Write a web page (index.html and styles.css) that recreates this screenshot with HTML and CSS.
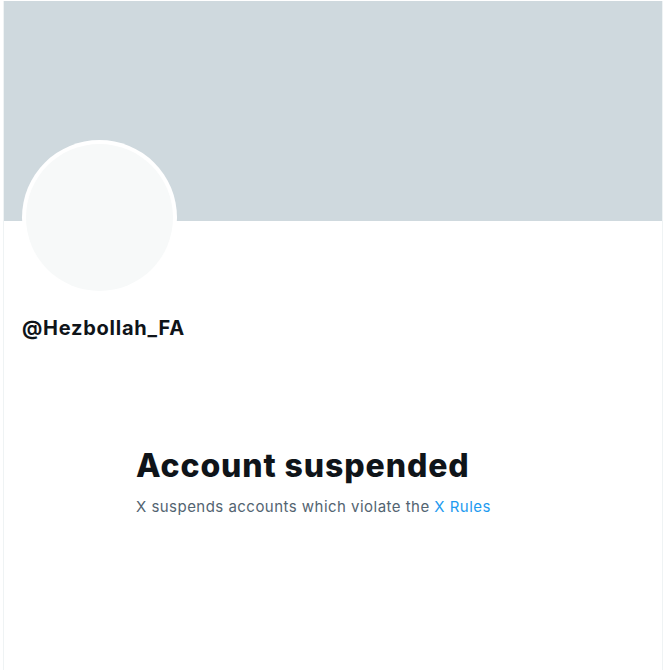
FILE: index.html
```html
<!DOCTYPE html>
<html>
<head>
<meta charset="utf-8">
<link rel="stylesheet" href="styles.css">
</head>
<body>
<main class="column">
  <div class="banner"></div>
  <div class="profile">
    <div class="avatar"><div class="avatar-inner"></div></div>
    <div class="handle">@Hezbollah_FA</div>
  </div>
  <section class="empty">
    <h1 class="empty-title">Account suspended</h1>
    <p class="empty-text">X suspends accounts which violate the <a class="link" href="#">X Rules</a></p>
  </section>
</main>
</body>
</html>
```
FILE: styles.css
```css
html, body {
  margin: 0;
  padding: 0;
  background: #ffffff;
}
body {
  font-family: "Inter", "Noto Sans", sans-serif;
  color: #0f1419;
}
.column {
  width: 658px;
  min-height: 670px;
  margin-left: 3px;
  border-left: 1px solid #eff3f4;
  border-right: 1px solid #eff3f4;
  box-sizing: content-box;
}
.banner {
  height: 220px;
  margin-top: 1px;
  background: #cfd9de;
}
.profile {
  padding: 0 18px;
}
.avatar {
  width: 155px;
  height: 155px;
  margin-top: -81px;
  border-radius: 50%;
  background: #ffffff;
  padding: 4px;
  box-sizing: border-box;
}
.avatar-inner {
  width: 100%;
  height: 100%;
  border-radius: 50%;
  background: #f7f9f9;
}
.handle {
  margin-top: 21px;
  font-size: 20px;
  font-weight: 700;
  line-height: 24px;
  letter-spacing: 0.75px;
}
.empty {
  margin: 108px 0 0 132px;
  width: 420px;
}
.empty-title {
  margin: 0;
  font-size: 32px;
  font-weight: 800;
  line-height: 36px;
  letter-spacing: 0.9px;
}
.empty-text {
  margin: 13px 0 0;
  font-size: 15px;
  line-height: 20px;
  letter-spacing: 0.47px;
  color: #536471;
}
.link {
  color: #1d9bf0;
  text-decoration: none;
}
```
